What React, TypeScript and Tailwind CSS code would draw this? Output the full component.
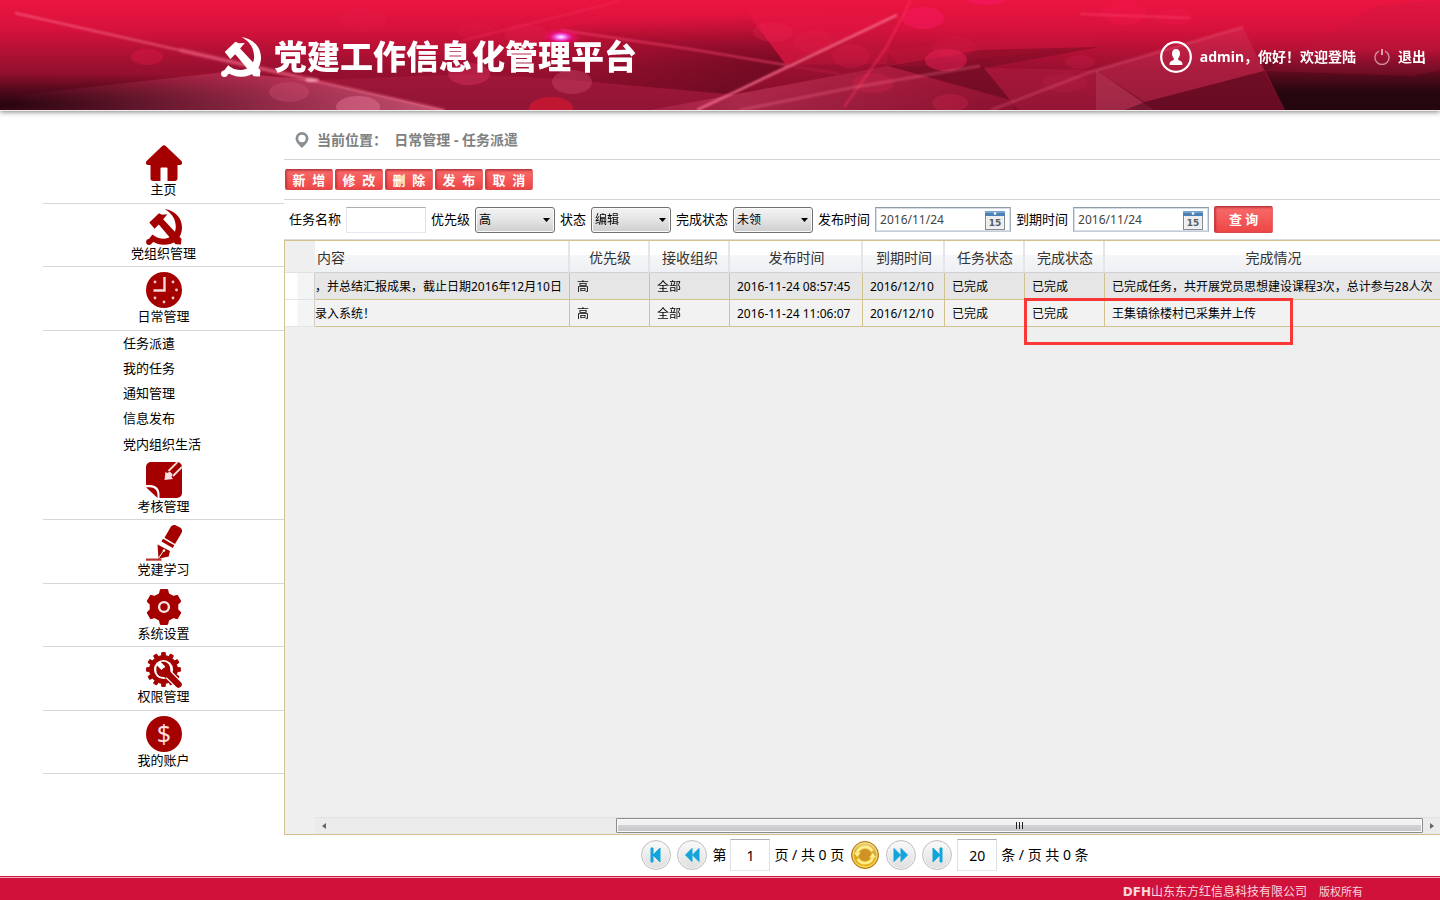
import React from "react";

const RED = "#a40000";

function gearPath(cx: number, cy: number, teeth: number, outer: number, inner: number, topShare: number, rootShare: number) {
  const pts: string[] = [];
  const step = (Math.PI * 2) / teeth;
  for (let i = 0; i < teeth; i++) {
    const a = i * step - Math.PI / 2;
    const corners: [number, number][] = [
      [a - step * rootShare, inner],
      [a - step * topShare, outer],
      [a + step * topShare, outer],
      [a + step * rootShare, inner],
    ];
    corners.forEach(([t, r]) => pts.push(`${(cx + r * Math.cos(t)).toFixed(2)} ${(cy + r * Math.sin(t)).toFixed(2)}`));
  }
  return `M${pts.join("L")}Z`;
}

function Emblem({ className, color }: { className: string; color: string }) {
  return (
    <svg viewBox="0 0 36 36" className={className} fill={color} aria-hidden="true">
      <path d="M18.500 0C29 1.500 36 9 36 18.500c0 5.500-2 9.500-5 12.500-3.500 3.300-8 4.800-13 4.800-5 0-9-1.500-12-3.800l2.500-5c3 2 5.500 2.700 9 2.700 7 0 12.300-4.600 12.300-11.600C29.800 10.500 26.500 4.500 18.500 0z" />
      <circle cx="3" cy="33" r="2.900" />
      <path d="M2.500 30.500l4-5 5 4-6 5z" />
      <path d="M3.300 13.500l9.700-9.200 3 1.400 5.400-.4-4.200 5L35.500 30l-.5 5.500-5.500-.2L12.800 15.500l-4.300 4.300z" />
    </svg>
  );
}

function HomeIcon() {
  return (
    <svg viewBox="0 0 36 36" className="size-9" fill={RED} aria-hidden="true">
      <path d="M16 1.200c1.200-1.200 2.800-1.200 4 0l15.200 14.600c1.700 1.700.9 4.200-1.500 4.200H31.500v13.200c0 1.800-1 2.800-2.800 2.800H21.500V23.500a1 1 0 0 0-1-1h-5a1 1 0 0 0-1 1V36H7.300c-1.800 0-2.800-1-2.800-2.800V20H2.300C-.1 20-.9 17.500.8 15.800z" />
    </svg>
  );
}

function ClockIcon() {
  const dots = [[9, 10], [27, 10], [30.5, 18], [27, 26], [18, 30], [9, 26]];
  return (
    <svg viewBox="0 0 36 36" className="size-9" aria-hidden="true">
      <circle cx="18" cy="18" r="18" fill={RED} />
      <path d="M18.500 5v13.500H7.500" fill="none" stroke="#f3d9d9" strokeWidth="2.400" />
      {dots.map(([x, y]) => (
        <circle key={`${x}-${y}`} cx={x} cy={y} r="1.400" fill="#efcaca" />
      ))}
    </svg>
  );
}

function NoteIcon() {
  return (
    <svg viewBox="0 0 36 36" className="size-9" aria-hidden="true">
      <path fill={RED} d="M5 0h26a5 5 0 0 1 5 5v26a5 5 0 0 1-5 5H13.500v-3.500c0-6-3.500-9.500-9.500-9.500H0V5a5 5 0 0 1 5-5z" />
      <path fill={RED} d="M0 25.200h3.500c5 0 8 3 8 7.800V36z" />
      <path d="M31.500 0L22.500 9M36 5L27 14" fill="none" stroke="#f6dfdf" strokeWidth="1.800" />
      <path d="M19.500 9.500l1.500 1.500 3-1.200 2.500 2.500-1 3 1.500 1.700-8.500 1z" fill="#f6dfdf" />
    </svg>
  );
}

function PenIcon() {
  return (
    <svg viewBox="0 0 36 36" className="size-9" fill={RED} aria-hidden="true">
      <path d="M24.500 2.200c1.300-2 3.500-2.700 5.500-1.700l4 2c2 1.200 2.600 3.400 1.500 5.400L29 19l-10.500-6.200z" />
      <path d="M17 13.800l11.300 6.500-1.500 2.700-11.300-6.500z" />
      <path d="M11.500 19.500l12.500 6.500-1.300 5.500-10.200 2.300z" />
      <path d="M12.700 33l5-7.500" stroke="#fff" strokeWidth="1" />
      <circle cx="18" cy="25.500" r="1.300" fill="#fff" />
      <rect x="0" y="33.500" width="15.500" height="2.200" opacity=".8" />
    </svg>
  );
}

function GearIcon() {
  return (
    <svg viewBox="0 0 36 36" className="size-9" aria-hidden="true">
      <path d={gearPath(18, 18, 6, 17, 13.4, 0.17, 0.29)} fill={RED} stroke={RED} strokeWidth="2.400" strokeLinejoin="round" />
      <circle cx="18" cy="18" r="4.900" fill={RED} stroke="#f6e6e6" strokeWidth="2.400" />
    </svg>
  );
}

function WrenchGearIcon() {
  return (
    <svg viewBox="0 0 36 36" className="size-9" aria-hidden="true">
      <path d={gearPath(17.5, 17.5, 12, 17, 14, 0.19, 0.27)} fill={RED} stroke={RED} strokeWidth="1" strokeLinejoin="round" />
      <circle cx="17.500" cy="17.500" r="9.600" fill="#fff" />
      <path d="M20 20l15 15" stroke="#fff" strokeWidth="9" strokeLinecap="round" />
      <path d="M19 19l13.500 13.500" stroke={RED} strokeWidth="6.500" strokeLinecap="round" />
      <path d="M11 13.500l4.500 4.500 3-.5.700-3L14.800 10c4.200-1 8.400 1 9.200 5.200.4 2.200 0 4 1 5.800l-5 5c-2-1.600-4-1-5.800-1.600-3.600-1.300-4.800-6.400-3.200-10.900z" fill={RED} />
    </svg>
  );
}

function DollarIcon() {
  return (
    <svg viewBox="0 0 36 36" className="size-9" aria-hidden="true">
      <circle cx="18" cy="18" r="18" fill={RED} />
      <text x="18" y="27" textAnchor="middle" fontSize="25" fontFamily="Noto Sans, sans-serif" fill="#f8dede">$</text>
    </svg>
  );
}

function HeaderArt() {
  const bokeh: [number, number, number, number, string, number][] = [
    [147, 57, 16, 8, "#e0184a", 0.4],
    [289, 92, 20, 10, "#e86088", 0.25],
    [358, 107, 22, 11, "#f080a0", 0.4],
    [469, 74, 21, 11, "#d83060", 0.45],
    [572, 82, 20, 12, "#d85078", 0.35],
    [551, 108, 22, 11, "#e01830", 0.6],
    [363, 20, 24, 12, "#f02858", 0.12],
    [475, 31, 18, 8, "#f02858", 0.12],
    [526, 35, 22, 11, "#f02858", 0.2],
    [773, 32, 20, 10, "#f02858", 0.25],
    [814, 42, 20, 12, "#f02858", 0.15],
    [923, 18, 21, 11, "#f81860", 0.5],
    [946, 60, 21, 11, "#e82058", 0.5],
    [954, 47, 22, 11, "#e82058", 0.15],
    [986, 0, 18, 5, "#f81870", 0.5],
    [851, 56, 19, 12, "#e02050", 0.25],
    [873, 83, 21, 10, "#e02850", 0.25],
    [950, 103, 18, 9, "#d82850", 0.3],
    [1124, 13, 22, 12, "#f81850", 0.3],
    [1174, 17, 18, 8, "#f81850", 0.25],
    [1080, 62, 15, 7, "#d82050", 0.25],
    [1065, 83, 23, 9, "#c82850", 0.2],
  ];
  return (
    <svg viewBox="0 0 1440 110" preserveAspectRatio="none" className="absolute inset-0 size-full" aria-hidden="true">
      <defs>
        <linearGradient id="base" x1="0" y1="0" x2="0" y2="1">
          <stop offset="0" stopColor="#ec1541" />
          <stop offset=".25" stopColor="#d8123c" />
          <stop offset=".6" stopColor="#9c1030" />
          <stop offset="1" stopColor="#7c0e2a" />
        </linearGradient>
        <radialGradient id="darkLeft" cx="0" cy="0.95" r=".3">
          <stop offset="0" stopColor="#20040c" stopOpacity=".95" />
          <stop offset="1" stopColor="#28040e" stopOpacity="0" />
        </radialGradient>
        <linearGradient id="darkRight" x1="0" y1="0" x2="0" y2="1">
          <stop offset=".45" stopColor="#20060d" stopOpacity="0" />
          <stop offset=".85" stopColor="#20060d" stopOpacity=".95" />
        </linearGradient>
        <linearGradient id="darkUpper" x1="0" y1="0" x2="0.15" y2="1">
          <stop offset=".2" stopColor="#500618" stopOpacity="0" />
          <stop offset="1" stopColor="#500618" stopOpacity=".5" />
        </linearGradient>
        <linearGradient id="darkLower" x1="0" y1="0" x2="1" y2="0">
          <stop offset="0.2" stopColor="#500618" stopOpacity="0" />
          <stop offset="1" stopColor="#500618" stopOpacity=".55" />
        </linearGradient>
        <linearGradient id="floor" x1="0" y1="0" x2="1" y2="0">
          <stop offset="0" stopColor="#c84068" stopOpacity="0" />
          <stop offset=".7" stopColor="#e06088" stopOpacity=".45" />
          <stop offset="1" stopColor="#f080a0" stopOpacity=".6" />
        </linearGradient>
        <linearGradient id="pane" x1="0" y1="0" x2="1" y2="0">
          <stop offset="0" stopColor="#c83860" stopOpacity=".3" />
          <stop offset=".25" stopColor="#d84870" stopOpacity=".45" />
          <stop offset="1" stopColor="#c02048" stopOpacity=".2" />
        </linearGradient>
        <linearGradient id="bright" x1="0" y1="0" x2="0" y2="1">
          <stop offset="0" stopColor="#ec1845" stopOpacity=".2" />
          <stop offset="1" stopColor="#e01844" stopOpacity=".6" />
        </linearGradient>
        <radialGradient id="flare">
          <stop offset="0" stopColor="#fff" />
          <stop offset=".25" stopColor="#f070ff" />
          <stop offset=".55" stopColor="#f81090" stopOpacity=".6" />
          <stop offset="1" stopColor="#f81060" stopOpacity="0" />
        </radialGradient>
        <filter id="soft" x="-20%" y="-50%" width="140%" height="200%">
          <feGaussianBlur stdDeviation=".9" />
        </filter>
      </defs>
      <rect width="1440" height="110" fill="url(#base)" />
      <rect width="1440" height="110" fill="url(#darkLeft)" />
      <path d="M0 97L225 72L312 80L445 110H0z" fill="url(#floor)" />
      <path d="M312 80L470 74L560 79L734 95L700 110H445z" fill="#b02048" opacity=".4" />
      <path d="M561 30L786 65L745 10L620 10z" fill="url(#darkUpper)" />
      <path d="M470 72L561 30L786 65L730 94L560 79z" fill="url(#darkLower)" />
      <path d="M745 8L897 15L786 65z" fill="url(#bright)" />
      <path d="M897 15L886 64L786 65z" fill="#c81840" opacity=".35" />
      <path d="M885 50L1050 35L1090 30L1096 46L900 68z" fill="#d01840" opacity=".25" />
      <path d="M890 66L980 50L1100 47L984 68z" fill="#500818" opacity=".3" />
      <path d="M650 110L888 66L1014 100V110z" fill="url(#pane)" />
      <path d="M888 66L984 68L1010 100z" fill="#600a20" opacity=".5" />
      <path d="M984 68L1096 70V110H1018z" fill="#b82048" opacity=".4" />
      <path d="M1240 0H1440V110H1285L1243 27z" fill="url(#darkRight)" />
      <path d="M1096 70L1154 110H1096z" fill="#d05070" opacity=".4" />
      <path d="M1096 70L1243 27L1264 71L1145 102z" fill="#d84068" opacity=".28" />
      <path d="M1145 102L1264 71L1285 110H1125z" fill="#580a20" opacity=".6" />
      <path d="M1264 71L1380 5L1440 0V70L1413 76z" fill="#c01840" opacity=".22" />
      {bokeh.map(([cx, cy, rx, ry, fill, opacity]) => (
        <ellipse key={`${cx}-${cy}`} cx={cx} cy={cy} rx={rx} ry={ry} fill={fill} opacity={opacity} />
      ))}
      <g filter="url(#soft)" stroke="#ff7898" fill="none">
        <path d="M15 13L312 80L445 110" strokeWidth="2" opacity=".6" />
        <path d="M180 50L312 80" strokeWidth="5" opacity=".25" />
        <path d="M561 30L690 49L786 65" strokeWidth="1.500" stroke="#ff4878" opacity=".8" />
        <path d="M786 65L840 74" strokeWidth="1.500" stroke="#ff4070" opacity=".3" />
        <path d="M461 41L620 1" strokeWidth="1.200" stroke="#ff4070" opacity=".55" />
        <path d="M697 110L897 15" strokeWidth="2" opacity=".85" />
        <path d="M911 0L886 48L844 107" strokeWidth="2.500" stroke="#ff3060" opacity=".45" />
        <path d="M740 110L850 88L980 66" strokeWidth="2.500" opacity=".35" />
        <path d="M991 110L1096 70L1243 27" strokeWidth="2" opacity=".35" />
        <path d="M1080 14L1190 18" strokeWidth="1.500" stroke="#ff5078" opacity=".6" />
      </g>
      <ellipse cx="561" cy="37" rx="20" ry="9" fill="url(#flare)" />
      <ellipse cx="312" cy="80" rx="7" ry="2" fill="#ffb0c4" opacity=".7" filter="url(#soft)" />
    </svg>
  );
}

const topNav = [
  { label: "主页", icon: <HomeIcon /> },
  { label: "党组织管理", icon: <Emblem className="size-9" color={RED} /> },
  { label: "日常管理", icon: <ClockIcon /> },
];
const subNav = ["任务派遣", "我的任务", "通知管理", "信息发布", "党内组织生活"];
const bottomNav = [
  { label: "考核管理", icon: <NoteIcon /> },
  { label: "党建学习", icon: <PenIcon /> },
  { label: "系统设置", icon: <GearIcon /> },
  { label: "权限管理", icon: <WrenchGearIcon /> },
  { label: "我的账户", icon: <DollarIcon /> },
];

function NavItem({ label, icon }: { label: string; icon: React.ReactNode }) {
  return (
    <a href="#" className="flex flex-col items-center border-b border-[#d6d6d6] pt-[5px] text-[13px] leading-4">
      {icon}
      <span>{label}</span>
    </a>
  );
}

function Sidebar() {
  return (
    <nav className="w-[284px] shrink-0 pt-[30px] pl-[43px]">
      <div className="grid h-[191px] auto-rows-fr">
        {topNav.map((n) => (
          <NavItem key={n.label} {...n} />
        ))}
      </div>
      <div className="grid h-[126px] auto-rows-fr pl-20 text-[13px]">
        {subNav.map((s) => (
          <a key={s} href="#" className="flex items-center">
            {s}
          </a>
        ))}
      </div>
      <div className="grid h-[317px] auto-rows-fr">
        {bottomNav.map((n) => (
          <NavItem key={n.label} {...n} />
        ))}
      </div>
    </nav>
  );
}

const redButton =
  "rounded-[2px] border border-t-[#b83a3e] border-r-[#e86a6a] border-b-[#d64a4c] border-l-[#c84044] bg-linear-to-b from-[#f96a6a] to-[#ee4646] font-bold whitespace-pre text-white shadow-[inset_1px_1px_2px_rgba(150,20,30,0.5)]";

function SelectField({ id, label, options }: { id: string; label: string; options: string[] }) {
  return (
    <>
      <label htmlFor={id}>{label}</label>
      <div className="relative">
        <select
          id={id}
          className="block h-[26px] w-20 appearance-none rounded-[3px] border border-[#707070] bg-linear-to-b from-[#f3f3f3] via-[#e4e4e4] to-[#cdcdcd] pl-[3px] text-xs text-black shadow-[inset_0_0_0_1px_#fafafa]"
        >
          {options.map((o) => (
            <option key={o}>{o}</option>
          ))}
        </select>
        <svg viewBox="0 0 7 4" className="pointer-events-none absolute top-[11px] right-[5px] h-1 w-[7px]" aria-hidden="true">
          <path d="M0 0h7L3.500 4z" />
        </svg>
      </div>
    </>
  );
}

function DateField({ id, label }: { id: string; label: string }) {
  return (
    <>
      <label htmlFor={id}>{label}</label>
      <div className="flex h-[25px] w-[136px] items-center border border-t-[#8f9ba8] border-r-[#a4b0bd] border-b-[#c4cdd7] border-l-[#a0acb9] bg-white pr-[5px] shadow-[inset_0_0_0_1px_#d5dde6]">
        <input id={id} type="text" defaultValue="2016/11/24" className="w-0 flex-1 pl-1 text-xs text-[#444] outline-none" />
        <button type="button" aria-label="选择日期" className="shrink-0">
          <svg viewBox="0 0 20 20" className="size-5" aria-hidden="true">
            <rect x=".5" y="1.500" width="19" height="18" fill="#f4f4f4" stroke="#85898e" />
            <rect x="2" y="6" width="16" height="12" fill="#eceded" />
            <rect x="0" y="1" width="20" height="5" fill="#4a80b4" />
            <rect x="0" y="1" width="20" height="2" fill="#78a5cd" />
            <circle cx="10" cy="3.500" r="1.300" fill="#fff" />
            <text x="10" y="16" textAnchor="middle" fontSize="9" fontWeight="700" fontFamily="DejaVu Sans, sans-serif" fill="#5a5d62">15</text>
          </svg>
        </button>
      </div>
    </>
  );
}

const columns = ["优先级", "接收组织", "发布时间", "到期时间", "任务状态", "完成状态", "完成情况"];
const rows = [
  ["，并总结汇报成果，截止日期2016年12月10日", "高", "全部", "2016-11-24 08:57:45", "2016/12/10", "已完成", "已完成", "已完成任务，共开展党员思想建设课程3次，总计参与28人次"],
  ["录入系统！", "高", "全部", "2016-11-24 11:06:07", "2016/12/10", "已完成", "已完成", "王集镇徐楼村已采集并上传"],
];

function TaskTable() {
  const head =
    "h-8 border-r-2 border-b border-r-[#e3e5e8] border-b-[#cfd0d2] bg-linear-to-b from-white from-45% via-[#f5f6f8] via-45% to-[#eff0f3] pt-[2px] pr-0 pb-0 pl-[2px] text-sm font-normal text-[#333] last:border-r-0";
  return (
    <table className="w-full table-fixed border-separate border-spacing-0">
      <colgroup>
        <col className="w-[30px]" />
        <col className="w-[255px]" />
        <col className="w-20" />
        <col className="w-20" />
        <col className="w-[133px]" />
        <col className="w-[82px]" />
        <col className="w-20" />
        <col className="w-20" />
        <col />
      </colgroup>
      <thead>
        <tr>
          <td className="border-b border-[#e2e2e2]" />
          <th className={`${head} text-left`}>内容</th>
          {columns.map((c) => (
            <th key={c} className={`${head} text-center`}>
              {c}
            </th>
          ))}
        </tr>
      </thead>
      <tbody className="text-xs">
        {rows.map((r) => (
          <tr key={r[0]} className="odd:bg-[#e6e6e6] even:bg-[#f2f2f2]">
            <td className="border-r border-b border-r-[#cfcfcf] border-b-[#e4e4e4] bg-linear-to-r from-white from-40% via-[#f2f4f7] via-45% to-[#f4f4f4]" />
            {r.map((cell, i) => (
              <td
                key={i}
                className="h-[27px] overflow-hidden border-r border-b border-[#d3c28d] px-[7px] pt-[2px] pb-0 whitespace-nowrap last:border-r-0 nth-2:px-0"
              >
                {cell}
              </td>
            ))}
          </tr>
        ))}
      </tbody>
    </table>
  );
}

function ScrollBar() {
  return (
    <div className="ml-[30px] flex h-[17px] items-start border-t border-[#e2e2e2] bg-[#ebebeb]">
      <button type="button" aria-label="向左滚动" className="flex h-[15px] w-[17px] items-center justify-center">
        <svg viewBox="0 0 4 6" className="h-[6px] w-1" fill="#666" aria-hidden="true"><path d="M4 0v6L0 3z" /></svg>
      </button>
      <div className="flex flex-1">
        <div className="flex-[285]" />
        <div className="flex h-[15px] flex-[806] items-center justify-center gap-[2px] rounded-[1px] border border-[#8c8c8c] bg-linear-to-b from-[#f2f2f2] from-45% via-[#d2d2d4] via-50% to-[#c6c6c8] shadow-[inset_0_0_0_1px_#fafafa]">
          <i className="h-[7px] w-px bg-[#222]" />
          <i className="h-[7px] w-px bg-[#222]" />
          <i className="h-[7px] w-px bg-[#222]" />
        </div>
      </div>
      <button type="button" aria-label="向右滚动" className="flex h-[15px] w-[17px] items-center justify-center">
        <svg viewBox="0 0 4 6" className="h-[6px] w-1" fill="#666" aria-hidden="true"><path d="M0 0v6l4-3z" /></svg>
      </button>
    </div>
  );
}

function RoundButton({ label, d }: { label: string; d: string }) {
  return (
    <button
      type="button"
      aria-label={label}
      className="flex size-[30px] items-center justify-center rounded-full border border-[#bfbfbf] bg-linear-to-b from-[#fafafa] to-[#dedede] shadow-[inset_0_0_0_1px_#f4f4f4]"
    >
      <svg viewBox="0 0 16 16" className="size-4" fill="#12a5dc" stroke="#12a5dc" strokeWidth="1" strokeLinejoin="round" aria-hidden="true">
        <path d={d} />
      </svg>
    </button>
  );
}

function Pager() {
  const box = "h-8 w-10 border border-t-[#abadb3] border-r-[#dbdfe6] border-b-[#e3e9ef] border-l-[#dcdfe4] bg-white text-center text-sm";
  return (
    <div className="flex h-[41px] items-center justify-center pb-px pl-[6px] text-sm">
      <div className="flex items-center gap-[6px]">
        <RoundButton label="首页" d="M3 1h2v14H3zM5 8l7-7v14z" />
        <RoundButton label="上一页" d="M8 1.500v13L1.500 8zM15 1.500v13L8.500 8z" />
      </div>
      <label className="ml-[5px] flex items-center gap-1">
        第<input className={box} defaultValue="1" />
      </label>
      <span className="ml-1">页 / 共 0 页</span>
      <div className="ml-[6px] flex items-center gap-[6px]">
        <button type="button" aria-label="刷新">
          <svg viewBox="0 0 30 30" className="size-[30px]" aria-hidden="true">
            <defs>
              <linearGradient id="gold" x1="0" y1="0" x2="0" y2="1">
                <stop offset="0" stopColor="#ecd27c" />
                <stop offset=".5" stopColor="#dda52a" />
                <stop offset="1" stopColor="#f0b808" />
              </linearGradient>
            </defs>
            <circle cx="15" cy="15" r="13.500" fill="url(#gold)" stroke="#a87810" />
            <circle cx="15" cy="15" r="12" fill="none" stroke="#f2dc90" strokeWidth="1" />
            <circle cx="15" cy="15" r="6" fill="#cf9226" />
            <path d="M7.200 12.500a8.300 8.300 0 0 1 15-1.500M22.800 17.500a8.300 8.300 0 0 1-15 1.500" fill="none" stroke="#fff08a" strokeWidth="2.600" />
            <path d="M3.800 12.500h7l-3.500 4.500zM19.200 17.500l3.500-4.500 3.500 4.500z" fill="#fff08a" />
          </svg>
        </button>
        <RoundButton label="下一页" d="M1 1.500v13L7.500 8zM8 1.500v13L14.500 8z" />
        <RoundButton label="末页" d="M11 1h2v14h-2zM11 8L4 1v14z" />
      </div>
      <label className="ml-[5px] flex items-center gap-1">
        <input className={box} defaultValue="20" />条 / 页 共 0 条
      </label>
    </div>
  );
}

export default function App() {
  return (
    <div
      lang="zh-CN"
      className="flex min-h-screen flex-col overflow-x-hidden bg-white font-['Noto_Sans','Noto_Sans_CJK_SC',sans-serif] text-black"
    >
      <header className="relative flex h-[110px] items-center justify-between pt-1 pr-[14px] pl-[221px] text-white shadow-[0_1px_0_#eee,0_2px_5px_rgba(0,0,0,0.5)]">
        <HeaderArt />
        <div className="relative flex items-center gap-[13px]">
          <Emblem className="size-10" color="#fff" />
          <h1 className="text-[33px] leading-10 font-black whitespace-nowrap">党建工作信息化管理平台</h1>
        </div>
        <div className="relative flex items-center text-sm font-bold whitespace-nowrap">
          <svg viewBox="0 0 32 32" className="mr-2 size-8" aria-hidden="true">
            <circle cx="16" cy="16" r="14.800" fill="none" stroke="#fff" strokeWidth="2.200" />
            <path fill="#fff" d="M16 8c2.600 0 4 1.900 4 4.600 0 1.900-.8 3.600-1.800 4.600v1.700c2.800.8 4.300 1.700 4.300 4.300 0 .6-.4.900-1 .9h-11c-.6 0-1-.3-1-.9 0-2.600 1.500-3.500 4.300-4.300v-1.700c-1-1-1.800-2.700-1.800-4.600C12 9.900 13.400 8 16 8z" />
          </svg>
          <span>admin，你好！欢迎登陆</span>
          <a href="#" className="ml-[18px] flex items-center gap-2">
            <svg viewBox="0 0 16 16" className="size-4" fill="none" aria-hidden="true">
              <path d="M5 2.200a7 7 0 1 0 6 0" stroke="#d0909f" strokeWidth="1.400" />
              <path d="M8 0v6" stroke="#fff" strokeWidth="1.200" />
            </svg>
            退出
          </a>
        </div>
      </header>

      <div className="flex flex-1">
        <Sidebar />
        <main className="flex min-w-0 flex-1 flex-col">
          <div className="flex h-[50px] items-center gap-2 border-b border-[#d4d4d4] pt-[11px] pl-[11px] text-sm font-bold text-[#808080]">
            <svg viewBox="0 0 14 16" className="h-4 w-[14px]" aria-hidden="true">
              <path fill="#8a8f94" fillRule="evenodd" d="M7 0a6.500 6.500 0 0 1 6.500 6.500C13.500 10 9.500 13.500 7 16 4.500 13.500.5 10 .5 6.500A6.500 6.500 0 0 1 7 0zm0 2.800a3.700 3.700 0 1 0 0 7.400 3.700 3.700 0 0 0 0-7.400z" />
            </svg>
            <span className="whitespace-pre">当前位置：  日常管理 - 任务派遣</span>
          </div>
          <div className="flex h-10 items-center gap-[2px] border-b border-[#d4d4d4] pl-px">
            {["新  增", "修  改", "删  除", "发  布", "取  消"].map((b) => (
              <button key={b} type="button" className={`${redButton} h-[21px] w-12 pt-px text-[13px] leading-[19px]`}>
                {b}
              </button>
            ))}
          </div>
          <div className="flex h-10 items-center gap-[5px] border-b border-[#d8dade] pl-[5px] text-[13px] whitespace-nowrap">
            <label htmlFor="task-name">任务名称</label>
            <input
              id="task-name"
              type="text"
              className="h-[26px] w-20 border border-t-[#abadb3] border-r-[#dbdfe6] border-b-[#e3e9ef] border-l-[#e2e3ea] bg-white px-1 text-xs"
            />
            <SelectField id="priority" label="优先级" options={["高", "中", "低"]} />
            <SelectField id="status" label="状态" options={["编辑", "发布"]} />
            <SelectField id="done" label="完成状态" options={["未领", "已完成"]} />
            <DateField id="publish-date" label="发布时间" />
            <DateField id="due-date" label="到期时间" />
            <button type="button" className={`${redButton} h-[27px] w-[59px]`}>
              查 询
            </button>
          </div>
          <div className="relative flex flex-1 flex-col justify-between border border-r-0 border-[#d3c28d] bg-[#efefef]">
            <TaskTable />
            <div className="pointer-events-none absolute top-[57px] left-[739px] h-[47px] w-[269px] border-3 border-[#fb3838]" />
            <ScrollBar />
          </div>
          <Pager />
        </main>
      </div>

      <footer className="flex h-6 items-center justify-end gap-3 border-t border-[#d0113a] bg-[#d0113a] pt-[6px] pr-[77px] text-[11px] leading-4 text-[#fbd5dd] shadow-[inset_0_1px_0_#f3a8b8]">
        <span className="flex items-center">
          <b className="font-['DejaVu_Sans',sans-serif] text-xs">DFH</b>
          <span className="text-xs">山东东方红信息科技有限公司</span>
        </span>
        <span>版权所有</span>
      </footer>
    </div>
  );
}
